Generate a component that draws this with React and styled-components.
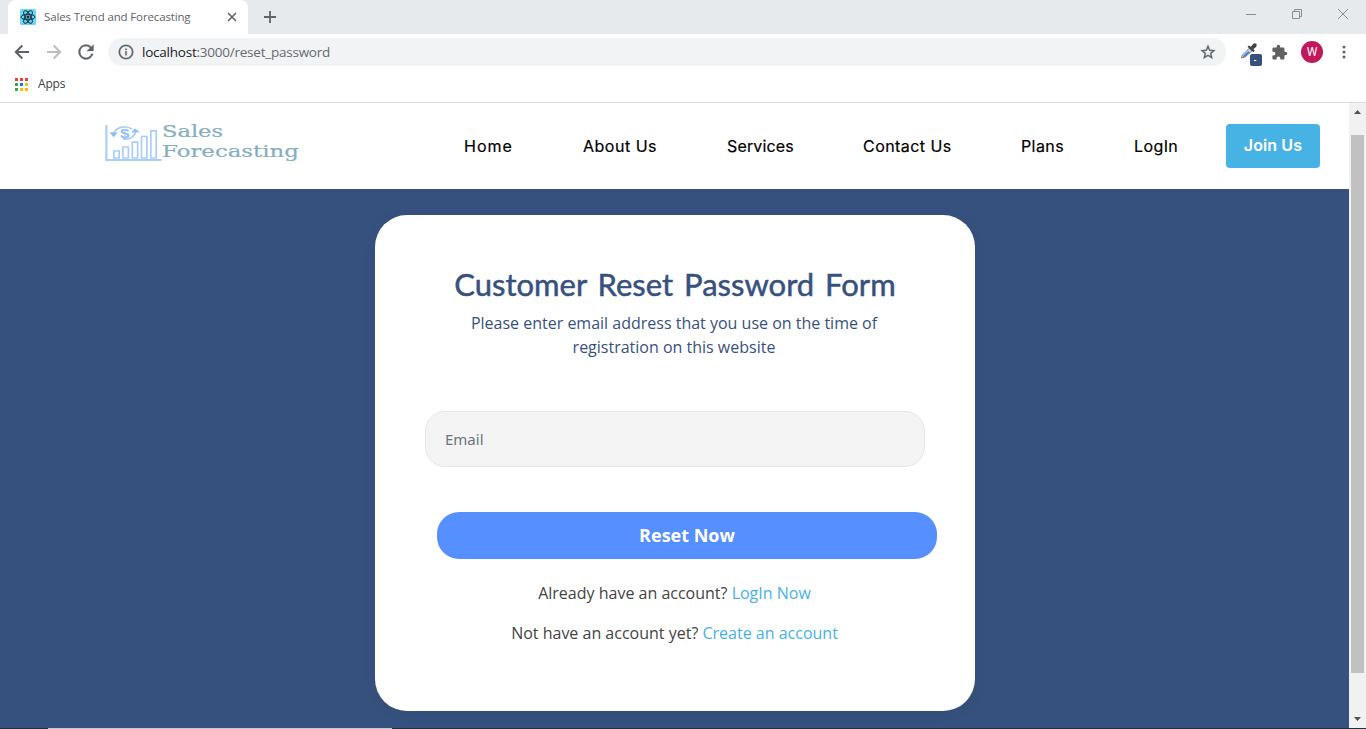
import React from 'react';
import styled, { createGlobalStyle } from 'styled-components';

const Global = createGlobalStyle`
  * { box-sizing: border-box; }
  html, body { margin: 0; padding: 0; overflow: hidden; }
  body { font-family: 'Open Sans', sans-serif; }
  svg { display: block; flex: none; }
`;

const Window = styled.div`
  width: 1366px;
  height: 729px;
  display: flex;
  flex-direction: column;
  background: #fff;
  overflow: hidden;
`;

const TabStrip = styled.div`
  height: 34px;
  display: flex;
  background: #e7eaed;
  padding-left: 8px;
`;

const Tab = styled.div`
  width: 240px;
  height: 34px;
  display: flex;
  align-items: center;
  padding: 0 10px 0 12px;
  background: #fff;
  border-radius: 8px 8px 0 0;
`;

const TabTitle = styled.span`
  flex: 1;
  margin-left: 8px;
  font: 11.5px/16px 'Open Sans', sans-serif;
  letter-spacing: -0.14px;
  color: #5f6368;
  white-space: nowrap;
`;

const NewTab = styled.div`
  display: flex;
  align-items: center;
  padding-left: 15px;
`;

const WindowControls = styled.div`
  display: flex;
  margin-left: auto;
  align-items: flex-start;
  gap: 34px;
  padding: 8px 17px 0 0;
`;

const Toolbar = styled.div`
  height: 36px;
  display: flex;
  align-items: center;
  padding-left: 14px;
`;

const NavButtons = styled.div`
  display: flex;
  gap: 16px;
`;

const AddressBar = styled.div`
  width: 1118px;
  height: 28px;
  margin-left: 14px;
  padding: 0 10px;
  display: flex;
  align-items: center;
  border-radius: 14px;
  background: #f1f3f4;
`;

const Url = styled.span`
  flex: 1;
  margin-left: 8px;
  font: 13.5px/20px 'Open Sans', sans-serif;
  letter-spacing: -0.23px;
  color: #666a6e;
  b { font-weight: 400; color: #202124; }
`;

const Extensions = styled.div`
  display: flex;
  align-items: center;
  gap: 9px;
  margin-left: 14px;
`;

const Avatar = styled.div`
  width: 22px;
  height: 22px;
  margin: 0 10px 0 4px;
  border-radius: 50%;
  background: #c2185b;
  color: #fff;
  font: 400 12px/22px Roboto, sans-serif;
  text-align: center;
`;

const Bookmarks = styled.div`
  height: 33px;
  display: flex;
  align-items: center;
  padding: 0 0 4px 15px;
  border-bottom: 1px solid #dadce0;
`;

const BookmarkLabel = styled.span`
  margin-left: 10px;
  font: 12px/16px 'Open Sans', sans-serif;
  letter-spacing: -0.2px;
  color: #3c4043;
`;

const Viewport = styled.div`
  height: 625px;
  display: flex;
`;

const Page = styled.div`
  width: 1349px;
  display: flex;
  flex-direction: column;
  background: #37517e;
`;

const Header = styled.header`
  height: 86px;
  display: flex;
  align-items: center;
  padding: 0 29px 0 104px;
  background: #fff;
`;

const Menu = styled.nav`
  display: flex;
  gap: 70px;
  margin-left: 164px;
`;

const MenuLink = styled.a`
  width: ${(p) => p.$width}px;
  font: 400 16px/24px Inter, sans-serif;
  letter-spacing: ${(p) => p.$tracking || 0}px;
  color: #000;
  -webkit-text-stroke: 0.2px #000;
  white-space: nowrap;
`;

const JoinButton = styled.button`
  width: 94px;
  height: 44px;
  margin-left: auto;
  padding: 0 0 2px;
  border: 0;
  border-radius: 4px;
  background: #47b2e4;
  color: #fff;
  font: 600 16px/24px Inter, sans-serif;
  letter-spacing: 0.1px;
`;

const Main = styled.main`
  flex: 1;
  display: flex;
  justify-content: center;
  align-items: flex-start;
  padding: 26px 0 0 1px;
`;

const Card = styled.form`
  width: 600px;
  height: 496px;
  padding: 48px 50px 0;
  border-radius: 32px;
  background: #fff;
  box-shadow: 0 2px 14px rgba(0, 0, 0, 0.05);
`;

const Title = styled.h2`
  margin: 0;
  font: 400 31px/42px Lato, sans-serif;
  word-spacing: 3px;
  color: #37517e;
  -webkit-text-stroke: 0.5px #37517e;
  text-align: center;
  white-space: nowrap;
`;

const Intro = styled.p`
  width: 430px;
  margin: 6px auto 0 34px;
  font: 16px/24px 'Open Sans', sans-serif;
  color: #37517e;
  text-align: center;
`;

const EmailField = styled.input`
  display: block;
  width: 500px;
  height: 56px;
  margin-top: 52px;
  padding: 0 19px;
  border: 1px solid #e6e6e6;
  border-radius: 20px;
  background: #f4f4f4;
  font: 15px/24px 'Noto Sans', sans-serif;
  &::placeholder { color: #6c757d; opacity: 1; }
`;

const SubmitButton = styled.button`
  display: block;
  width: 500px;
  height: 47px;
  margin: 45px 0 22px 12px;
  padding: 0;
  border: 0;
  border-radius: 22px;
  background: #568fff;
  color: #fff;
  font: 700 18px/27px 'Open Sans', sans-serif;
`;

const Hint = styled.p`
  margin: 0 1px 16px 0;
  font: 16px/24px 'Open Sans', sans-serif;
  color: #444;
  text-align: center;
  a { color: #47b2e4; }
`;

const Scrollbar = styled.div`
  width: 17px;
  display: flex;
  flex-direction: column;
  align-items: center;
  justify-content: space-between;
  padding: 7px 0 7px;
  background: #f1f1f1;
`;

const Thumb = styled.div`
  width: 13px;
  height: 538px;
  margin: 21px 0 auto;
  background: #c1c1c1;
`;

const Taskbar = styled.div`
  height: 1px;
  padding-left: 48px;
  background: #20303f;
`;

const SearchEdge = styled.div`
  width: 344px;
  height: 1px;
  background: #c9c5ca;
`;

function ReactIcon() {
  return (
    <svg width="16" height="16" viewBox="0 0 16 16">
      <rect width="16" height="16" rx="1.5" fill="#61dafb" />
      <g fill="none" stroke="#20303a" strokeWidth="1">
        <ellipse cx="8" cy="8" rx="7" ry="2.7" />
        <ellipse cx="8" cy="8" rx="7" ry="2.7" transform="rotate(60 8 8)" />
        <ellipse cx="8" cy="8" rx="7" ry="2.7" transform="rotate(120 8 8)" />
      </g>
      <circle cx="8" cy="8" r="1.5" fill="#20303a" />
    </svg>
  );
}

function MaterialIcon({ path, color = '#5f6368', size = 20 }) {
  return (
    <svg width={size} height={size} viewBox="0 0 24 24" fill={color} stroke={color} strokeWidth=".5">
      <path d={path} />
    </svg>
  );
}

function Stroke({ width, height, path, color, weight }) {
  return (
    <svg width={width} height={height} viewBox={`0 0 ${width} ${height}`} fill="none" stroke={color} strokeWidth={weight}>
      <path d={path} />
    </svg>
  );
}

function AppsIcon() {
  const colors = ['#ea4335', '#ea4335', '#ea4335', '#34a853', '#1a73e8', '#fbbc04', '#34a853', '#fbbc04', '#fbbc04'];
  return (
    <svg width="13" height="13" viewBox="0 0 13 13">
      {colors.map((c, i) => (
        <rect key={i} x={(i % 3) * 5} y={Math.floor(i / 3) * 5} width="3" height="3" fill={c} />
      ))}
    </svg>
  );
}

function EyedropperIcon() {
  return (
    <svg width="22" height="28" viewBox="0 0 22 28">
      <path d="M1.500 20 2.300 17.200 9 10.500 11.800 13 5 19Z" fill="#dce6f3" stroke="#777c83" strokeWidth="1" />
      <path d="M3 19 3.500 17.500 8.300 13 10 14.300 4.800 18.800Z" fill="#3f7de0" />
      <path d="m7.500 8.800 1.400-1.300 2 1.300 2-2.600c1-1.200 2.700-1.200 3.400-.4.8 1 .4 2.500-.6 3.400l-2.200 1.900 1.200 1.600-1.400 1.500Z" fill="#454545" />
      <rect x="10" y="16" width="12" height="12" rx="2" fill="#37517e" />
      <path d="M14 22.500h2" stroke="#fff" />
      <path d="M16 22.500h1" stroke="#ef5350" />
    </svg>
  );
}

function Logo() {
  return (
    <svg width="196" height="46" viewBox="0 0 196 46">
      <g fill="none" stroke="#a9cff8" strokeWidth="1.7">
        <path d="M2.400 2V37H57.500" strokeWidth="2.200" />
        <path d="M9.800 28h5.400v7H9.800zM19 24h5.400v11H19zM28.300 19.200h5.400V35h-5.400zM37.500 13.500h5.400V35h-5.400zM46.800 7.800h5.400V35h-5.400z" />
        <path d="M9.400 12C10.200 6.500 15.500 3.600 22 4q3 .2 6 2M31.500 8.500c-.4 5-6 8.300-12.500 7.400" />
      </g>
      <path d="M5.500 9.200 9.500 14.200 14 9.500ZM27 9.500 31 5.500 36 9.300Z" fill="#8fbff6" />
      <text x="16" y="14.800" fontFamily="Liberation Sans, sans-serif" fontSize="13" fontWeight="700" fill="#91bff2" textLength="9.500" lengthAdjust="spacingAndGlyphs">$</text>
      <g fontFamily="DejaVu Serif, serif" fill="#84afbf" stroke="#84afbf" strokeWidth=".2">
        <text x="58" y="14.200" fontSize="16" textLength="61" lengthAdjust="spacingAndGlyphs">Sales</text>
        <text x="58" y="34.400" fontSize="16.500" textLength="137" lengthAdjust="spacingAndGlyphs">Forecasting</text>
      </g>
    </svg>
  );
}

const MENU = [
  { label: 'Home', width: 49, tracking: 1 },
  { label: 'About Us', width: 74, tracking: 0.5 },
  { label: 'Services', width: 66, tracking: 0.15 },
  { label: 'Contact Us', width: 88, tracking: 0.45 },
  { label: 'Plans', width: 43, tracking: 0.4 },
  { label: 'LogIn', width: 45, tracking: 0.4 },
];

export default function App() {
  return (
    <Window>
      <Global />
      <TabStrip>
        <Tab>
          <ReactIcon />
          <TabTitle>Sales Trend and Forecasting</TabTitle>
          <Stroke width={12} height={12} path="M2 2 10 10M10 2 2 10" color="#5f6368" weight={1.6} />
        </Tab>
        <NewTab>
          <Stroke width={14} height={14} path="M7 1V13M1 7H13" color="#5f6368" weight={1.8} />
        </NewTab>
        <WindowControls>
          <Stroke width={12} height={12} path="M1 6.500H11" color="#8b8d90" weight={1} />
          <Stroke width={12} height={12} path="M1.500 3.500h7v7h-7zM3.500 3.500v-2h7v7h-2" color="#8b8d90" weight={1} />
          <Stroke width={12} height={12} path="M1 1 11 11M11 1 1 11" color="#8b8d90" weight={1} />
        </WindowControls>
      </TabStrip>
      <Toolbar>
        <NavButtons>
          <Stroke width={16} height={16} path="M15 8H2M8.300 1.500 1.800 8 8.300 14.500" color="#5f6368" weight={2} />
          <Stroke width={16} height={16} path="M1 8H14M7.700 1.500 14.200 8 7.700 14.500" color="#bcbec1" weight={2} />
          <svg width="16" height="16" viewBox="4 4 16 16" fill="#5f6368">
            <path d="M17.650 6.350A7.950 7.950 0 0 0 12 4a8 8 0 1 0 7.730 10h-2.080A6 6 0 1 1 12 6c1.660 0 3.140.69 4.220 1.780L13 11h7V4z" transform="translate(.7 .7) scale(.94)" stroke="#5f6368" strokeWidth=".3" />
          </svg>
        </NavButtons>
        <AddressBar>
          <MaterialIcon size={16} path="M11 17h2v-6h-2v6zM12 1a11 11 0 1 0 0 22 11 11 0 0 0 0-22zm0 20a9 9 0 1 1 0-18 9 9 0 0 1 0 18zM11 9h2V7h-2v2z" />
          <Url><b>localhost</b>:3000/reset_password</Url>
          <MaterialIcon size={16} path="M23 9.240l-7.910-.68L12 1.300 8.910 8.570 1 9.240l6 5.200-1.800 7.730L12 18.070l6.800 4.100L17.010 14.440zM12 16.020l-4.120 2.490 1.100-4.690-3.640-3.150 4.800-.41L12 5.840l1.880 4.430 4.800.41-3.640 3.150 1.090 4.690z" />
        </AddressBar>
        <Extensions>
          <EyedropperIcon />
          <svg width="17" height="17" viewBox="0 0 24 24" fill="#5f6368">
            <path d="M20.500 11H19V7c0-1.100-.9-2-2-2h-4V3.500a2.500 2.500 0 0 0-5 0V5H4c-1.100 0-1.990.9-1.990 2v3.800H3.500a2.700 2.700 0 0 1 0 5.400H2V20c0 1.100.9 2 2 2h3.800v-1.500a2.700 2.700 0 0 1 5.400 0V22H17c1.100 0 2-.9 2-2v-4h1.500a2.500 2.500 0 0 0 0-5z" />
          </svg>
          <Avatar>W</Avatar>
          <svg width="4" height="16" viewBox="0 0 4 16" fill="#5f6368">
            <circle cx="2" cy="3" r="1.500" />
            <circle cx="2" cy="8" r="1.500" />
            <circle cx="2" cy="13" r="1.500" />
          </svg>
        </Extensions>
      </Toolbar>
      <Bookmarks>
        <AppsIcon />
        <BookmarkLabel>Apps</BookmarkLabel>
      </Bookmarks>
      <Viewport>
        <Page>
          <Header>
            <Logo />
            <Menu>
              {MENU.map((m) => (
                <MenuLink key={m.label} $width={m.width} $tracking={m.tracking}>{m.label}</MenuLink>
              ))}
            </Menu>
            <JoinButton type="button">Join Us</JoinButton>
          </Header>
          <Main>
            <Card>
              <Title>Customer Reset Password Form</Title>
              <Intro>Please enter email address that you use on the time of registration on this website</Intro>
              <EmailField type="email" placeholder="Email" />
              <SubmitButton type="button">Reset Now</SubmitButton>
              <Hint>Already have an account? <a>LogIn Now</a></Hint>
              <Hint>Not have an account yet? <a>Create an account</a></Hint>
            </Card>
          </Main>
        </Page>
        <Scrollbar>
          <svg width="7" height="4" viewBox="0 0 7 4" fill="#505050"><path d="M0 4 3.500 0 7 4z" /></svg>
          <Thumb />
          <svg width="7" height="4" viewBox="0 0 7 4" fill="#505050"><path d="M0 0 3.500 4 7 0z" /></svg>
        </Scrollbar>
      </Viewport>
      <Taskbar>
        <SearchEdge />
      </Taskbar>
    </Window>
  );
}
